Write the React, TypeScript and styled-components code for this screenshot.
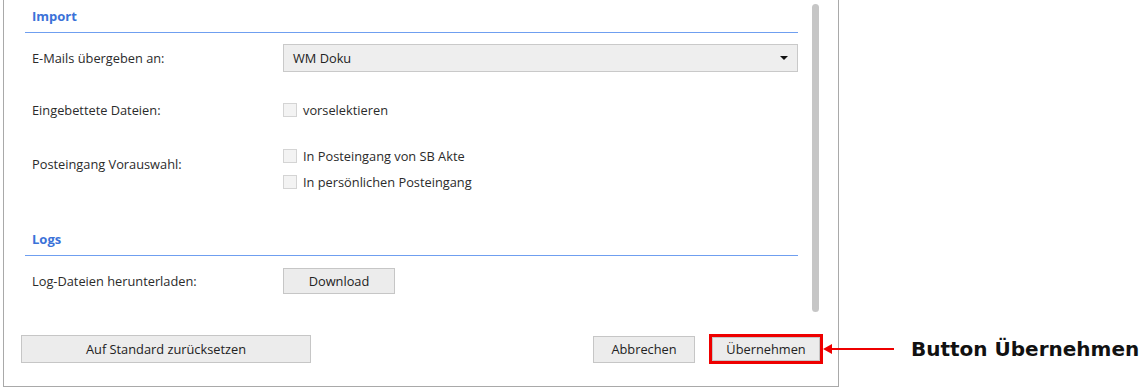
import React, { FC } from "react";
import styled, { createGlobalStyle } from "styled-components";

const GlobalStyle = createGlobalStyle`
  html, body {
    margin: 0;
    padding: 0;
    background: #ffffff;
  }
  body {
    font-family: "Open Sans", "Noto Sans", sans-serif;
    font-size: 12.8px;
    color: #2b2b2b;
  }
`;

const Page = styled.div`
  position: relative;
  width: 1145px;
  height: 391px;
  padding-left: 3px;
  box-sizing: border-box;
`;

const Window = styled.div`
  width: 836px;
  height: 387px;
  box-sizing: border-box;
  border: 1px solid #a9a9a9;
  border-top: none;
  display: flex;
  flex-direction: column;
  background: #ffffff;
`;

const ScrollArea = styled.div`
  height: 312px;
  display: flex;
  padding-left: 21px;
`;

const Content = styled.div`
  width: 773px;
  display: flex;
  flex-direction: column;
`;

const Scrollbar = styled.div`
  width: 7px;
  margin-left: 14px;
  margin-top: 4px;
  height: 308px;
  border-radius: 4px;
  background: #c6c6c6;
`;

const SectionHeading = styled.div<{ top: number }>`
  margin-top: ${({ top }) => top}px;
  height: 33px;
  box-sizing: border-box;
  padding-left: 7px;
  padding-bottom: 1px;
  display: flex;
  align-items: center;
  border-bottom: 1px solid #6f9ff0;
  color: #3b72d8;
  font-weight: 700;
  font-size: 13px;
`;

const FormRow = styled.div<{ top: number }>`
  margin-top: ${({ top }) => top}px;
  display: grid;
  grid-template-columns: 251px 1fr;
  align-items: center;
  padding-left: 7px;
`;

const Label = styled.div<{ offset?: number }>`
  align-self: ${({ offset }) => (offset !== undefined ? "start" : "center")};
  padding-top: ${({ offset }) => offset ?? 0}px;
  line-height: 16px;
`;

const Select = styled.div`
  height: 28px;
  box-sizing: border-box;
  border: 1px solid #c9c9c9;
  background: #eeeeee;
  display: flex;
  align-items: center;
  justify-content: space-between;
  padding: 0 9px 0 9px;
  color: #222222;
`;

const Caret = styled.span`
  width: 0;
  height: 0;
  border-left: 4px solid transparent;
  border-right: 4px solid transparent;
  border-top: 4px solid #111111;
`;

const CheckList = styled.div`
  display: flex;
  flex-direction: column;
`;

const CheckRow = styled.label`
  height: 26px;
  display: flex;
  align-items: center;
  gap: 6px;
`;

const CheckBox = styled.span`
  width: 14px;
  height: 14px;
  box-sizing: border-box;
  border: 1px solid #d4d4d4;
  background: #f3f3f3;
`;

const Button = styled.button<{ width: number; height: number; highlighted?: boolean }>`
  width: ${({ width }) => width}px;
  height: ${({ height }) => height}px;
  box-sizing: border-box;
  border: 1px solid #c6c6c6;
  background: #ececec;
  font-family: "Open Sans", "Noto Sans", sans-serif;
  font-size: 12.8px;
  color: #222222;
  padding: 0;
  outline: ${({ highlighted }) => (highlighted ? "3px solid #ee0000" : "none")};
`;

const BottomBar = styled.div`
  flex: 1;
  display: flex;
  align-items: center;
  padding: 0 18px 0 17px;
`;

const Spacer = styled.div`
  flex: 1;
`;

const ButtonGroup = styled.div`
  display: flex;
  align-items: center;
  gap: 17px;
`;

const Callout = styled.div`
  position: absolute;
  left: 822px;
  top: 334px;
  height: 30px;
  display: flex;
  align-items: center;
`;

const CalloutText = styled.span`
  margin-left: 17px;
  font-family: "DejaVu Sans", Verdana, sans-serif;
  font-weight: 700;
  font-size: 20px;
  color: #111111;
  white-space: nowrap;
`;

const Arrow: FC = () => (
  <svg width="72" height="14" viewBox="0 0 72 14">
    <line x1="8" y1="7" x2="72" y2="7" stroke="#ee0000" strokeWidth="2" />
    <polygon points="1,7 10,2 10,12" fill="#ee0000" />
  </svg>
);

const App: FC = () => {
  return (
    <>
      <GlobalStyle />
      <Page>
        <Window>
          <ScrollArea>
            <Content>
              <SectionHeading top={0}>Import</SectionHeading>
              <FormRow top={11}>
                <Label>E-Mails übergeben an:</Label>
                <Select>
                  <span>WM Doku</span>
                  <Caret />
                </Select>
              </FormRow>
              <FormRow top={25}>
                <Label>Eingebettete Dateien:</Label>
                <CheckRow>
                  <CheckBox />
                  vorselektieren
                </CheckRow>
              </FormRow>
              <FormRow top={20}>
                <Label offset={13}>Posteingang Vorauswahl:</Label>
                <CheckList>
                  <CheckRow>
                    <CheckBox />
                    In Posteingang von SB Akte
                  </CheckRow>
                  <CheckRow>
                    <CheckBox />
                    In persönlichen Posteingang
                  </CheckRow>
                </CheckList>
              </FormRow>
              <SectionHeading top={28}>Logs</SectionHeading>
              <FormRow top={12}>
                <Label>Log-Dateien herunterladen:</Label>
                <Button width={112} height={26}>
                  Download
                </Button>
              </FormRow>
            </Content>
            <Scrollbar />
          </ScrollArea>
          <BottomBar>
            <Button width={290} height={28}>
              Auf Standard zurücksetzen
            </Button>
            <Spacer />
            <ButtonGroup>
              <Button width={102} height={27}>
                Abbrechen
              </Button>
              <Button width={108} height={24} highlighted>
                Übernehmen
              </Button>
            </ButtonGroup>
          </BottomBar>
        </Window>
        <Callout>
          <Arrow />
          <CalloutText>Button Übernehmen</CalloutText>
        </Callout>
      </Page>
    </>
  );
};

export default App;
